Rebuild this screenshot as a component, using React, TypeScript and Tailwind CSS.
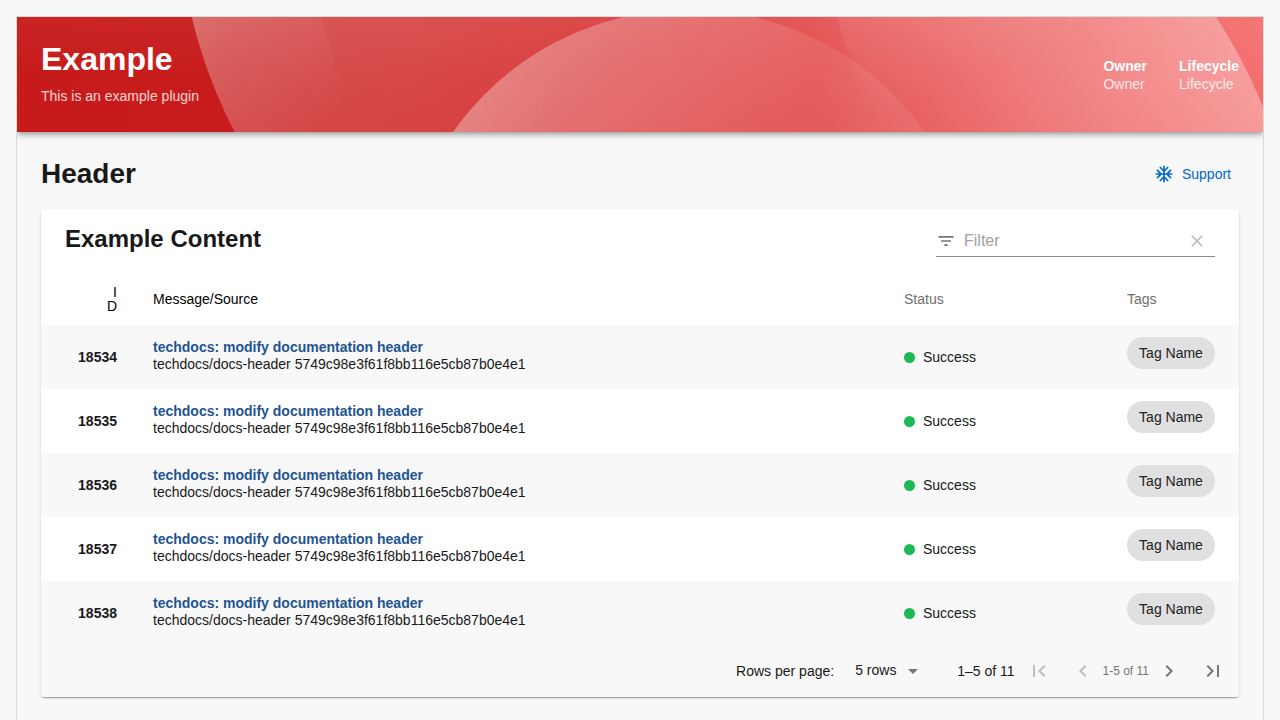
import { useState } from 'react';
import {
  MdAcUnit,
  MdArrowDropDown,
  MdChevronLeft,
  MdChevronRight,
  MdClear,
  MdFilterList,
  MdFirstPage,
  MdLastPage,
} from 'react-icons/md';

const rows = [18534, 18535, 18536, 18537, 18538].map((id) => ({
  id,
  message: 'techdocs: modify documentation header',
  source: 'techdocs/docs-header 5749c98e3f61f8bb116e5cb87b0e4e1',
  status: 'Success',
  tag: 'Tag Name',
}));

function HeaderBackdrop() {
  return (
    <svg
      className="absolute inset-0 h-full w-full"
      viewBox="0 0 1246 115"
      preserveAspectRatio="xMidYMid slice"
      aria-hidden="true"
    >
      <defs>
        <linearGradient id="base" gradientUnits="userSpaceOnUse" x1="0" y1="0" x2="1246" y2="0">
          <stop offset="0" stopColor="#c71b1b" />
          <stop offset="0.17" stopColor="#c81d1d" />
          <stop offset="0.43" stopColor="#da4040" />
          <stop offset="1" stopColor="#f57070" />
        </linearGradient>
        <linearGradient id="sheen" x1="0" y1="0" x2="0" y2="1">
          <stop offset="0" stopColor="#fff" stopOpacity="0.04" />
          <stop offset="0.5" stopColor="#fff" stopOpacity="0" />
          <stop offset="0.5" stopColor="#c00" stopOpacity="0" />
          <stop offset="1" stopColor="#c00" stopOpacity="0.06" />
        </linearGradient>
        <linearGradient id="left" gradientUnits="userSpaceOnUse" x1="170" y1="0" x2="530" y2="110">
          <stop offset="0" stopColor="#fff" stopOpacity="0.25" />
          <stop offset="0.6" stopColor="#fff" stopOpacity="0.12" />
          <stop offset="1" stopColor="#fff" stopOpacity="0" />
        </linearGradient>
        <linearGradient id="lens" gradientUnits="userSpaceOnUse" x1="190" y1="-10" x2="290" y2="120">
          <stop offset="0" stopColor="#fff" stopOpacity="0.11" />
          <stop offset="1" stopColor="#fff" stopOpacity="0" />
        </linearGradient>
        <linearGradient id="middle" gradientUnits="userSpaceOnUse" x1="450" y1="60" x2="760" y2="170">
          <stop offset="0" stopColor="#fff" stopOpacity="0.35" />
          <stop offset="1" stopColor="#fff" stopOpacity="0.08" />
        </linearGradient>
        <linearGradient id="right" gradientUnits="userSpaceOnUse" x1="810" y1="90" x2="1230" y2="-10">
          <stop offset="0" stopColor="#fff" stopOpacity="0" />
          <stop offset="0.45" stopColor="#fff" stopOpacity="0.17" />
          <stop offset="1" stopColor="#fff" stopOpacity="0.33" />
        </linearGradient>
        <linearGradient id="rightEdge" gradientUnits="userSpaceOnUse" x1="830" y1="0" x2="880" y2="100">
          <stop offset="0" stopColor="#fff" stopOpacity="0.08" />
          <stop offset="1" stopColor="#fff" stopOpacity="0" />
        </linearGradient>
        <clipPath id="leftClip">
          <circle cx="665" cy="-117" r="504" />
        </clipPath>
      </defs>
      <rect width="1246" height="115" fill="url(#base)" />
      <rect width="1246" height="115" fill="url(#sheen)" />
      <circle cx="665" cy="-117" r="504" fill="url(#left)" />
      <g clipPath="url(#leftClip)">
        <circle cx="-25" cy="130" r="353" fill="url(#lens)" />
      </g>
      <circle cx="672" cy="281" r="288.5" fill="url(#middle)" />
      <circle cx="778" cy="277" r="504" fill="url(#right)" />
      <circle cx="1070" cy="-60" r="257" fill="url(#rightEdge)" />
    </svg>
  );
}

function PageHeader() {
  return (
    <header className="relative flex items-center justify-between p-6 text-white shadow-[0_2px_4px_-1px_rgba(0,0,0,0.2),0_4px_5px_0_rgba(0,0,0,0.14),0_1px_10px_0_rgba(0,0,0,0.12)]">
      <HeaderBackdrop />
      <div className="relative">
        <h1 className="text-[32px] leading-9 font-bold">Example</h1>
        <p className="mt-2 text-sm leading-[23px] text-white/80">This is an example plugin</p>
      </div>
      <dl className="relative flex gap-8 text-sm leading-[18px]">
        <div>
          <dt className="font-bold">Owner</dt>
          <dd className="text-white/80">Owner</dd>
        </div>
        <div>
          <dt className="font-bold">Lifecycle</dt>
          <dd className="text-white/80">Lifecycle</dd>
        </div>
      </dl>
    </header>
  );
}

function FilterField() {
  const [query, setQuery] = useState('');
  return (
    <div className="flex h-8 w-[279px] items-center gap-2 border-b border-[#8c8c8c] pr-2">
      <MdFilterList className="size-5 shrink-0 text-[#757575]" />
      <input
        type="text"
        aria-label="Filter"
        placeholder="Filter"
        value={query}
        onChange={(event) => setQuery(event.target.value)}
        className="min-w-0 flex-1 bg-transparent text-base leading-5 outline-none placeholder:text-[#a0a0a0]"
      />
      <button type="button" aria-label="Clear filter" onClick={() => setQuery('')}>
        <MdClear className="size-5 text-[#bdbdbd]" />
      </button>
    </div>
  );
}

function Pagination() {
  return (
    <div className="flex h-[52px] items-center justify-end bg-[#f8f8f8] pr-1.5 text-sm text-[#181818]">
      <label htmlFor="page-size" className="mr-[21px]">
        Rows per page:
      </label>
      <div className="relative mr-8 flex items-center">
        <select
          id="page-size"
          defaultValue="5"
          className="w-[70px] appearance-none bg-transparent pb-0.5 text-sm outline-none"
        >
          <option value="5">5 rows</option>
          <option value="10">10 rows</option>
          <option value="20">20 rows</option>
        </select>
        <MdArrowDropDown className="pointer-events-none absolute right-0 size-6 text-[#757575]" />
      </div>
      <span className="mr-1">1–5 of 11</span>
      <div className="flex items-center text-[#757575]">
        <button type="button" disabled aria-label="First page" className="mr-1 flex w-10 justify-center text-[#bdbdbd]">
          <MdFirstPage className="size-6" />
        </button>
        <button type="button" disabled aria-label="Previous page" className="flex w-10 justify-center text-[#bdbdbd]">
          <MdChevronLeft className="size-6" />
        </button>
        <span className="text-xs">1-5 of 11</span>
        <button type="button" aria-label="Next page" className="mr-1 flex w-10 justify-center">
          <MdChevronRight className="size-6" />
        </button>
        <button type="button" aria-label="Last page" className="flex w-10 justify-center">
          <MdLastPage className="size-6" />
        </button>
      </div>
    </div>
  );
}

function ContentTable() {
  return (
    <section className="overflow-hidden rounded bg-white shadow-[0_2px_1px_-1px_rgba(0,0,0,0.2),0_1px_1px_0_rgba(0,0,0,0.14),0_1px_3px_0_rgba(0,0,0,0.12)]">
      <div className="flex h-16 items-start justify-between px-6 pt-4">
        <h3 className="text-2xl leading-7 font-bold">Example Content</h3>
        <FilterField />
      </div>
      <table className="w-full table-fixed text-left text-sm">
        <thead>
          <tr className="h-[52px] leading-[14px]">
            <th scope="col" className="w-24 pr-5 text-right font-normal text-black">
              <span className="inline-block w-3 align-middle break-all">ID</span>
            </th>
            <th scope="col" className="px-4 font-normal text-black">
              Message/Source
            </th>
            <th scope="col" className="w-[223px] px-4 font-normal text-[#6e6e6e]">
              Status
            </th>
            <th scope="col" className="w-32 pr-6 pl-4 font-normal text-[#6e6e6e]">
              Tags
            </th>
          </tr>
        </thead>
        <tbody>
          {rows.map((row) => (
            <tr key={row.id} className="h-16 odd:bg-[#f8f8f8]">
              <td className="pr-5 text-right font-bold">{row.id}</td>
              <td className="px-4 pt-[14px] align-top leading-[17px]">
                <a href="#" className="block font-bold text-[#1f5493]">
                  {row.message}
                </a>
                <p>{row.source}</p>
              </td>
              <td className="px-4">
                <div className="flex items-center gap-2">
                  <span className="size-[11px] rounded-full bg-[#1db954]" />
                  {row.status}
                </div>
              </td>
              <td className="pt-3 pr-6 pl-4 align-top">
                <span className="flex h-8 items-center justify-center rounded-full bg-[#e0e0e0] whitespace-nowrap text-[#212121]">
                  {row.tag}
                </span>
              </td>
            </tr>
          ))}
        </tbody>
      </table>
      <Pagination />
    </section>
  );
}

export default function App() {
  return (
    <div className="flex min-h-screen flex-col bg-[#f8f8f8] px-4 pt-4 font-['Liberation_Sans',Arial,sans-serif] text-[#181818]">
      <div className="flex-1 overflow-hidden border border-b-0 border-[#d9d9d9]">
        <PageHeader />
        <main className="px-6 pt-6 pb-[22px]">
          <div className="mb-[17px] flex items-center justify-between">
            <h2 className="text-[28px] leading-9 font-bold">Header</h2>
            <button type="button" className="flex items-center gap-2 pr-2 text-sm text-[#0066cc]">
              <MdAcUnit className="size-5" />
              Support
            </button>
          </div>
          <ContentTable />
        </main>
      </div>
    </div>
  );
}
